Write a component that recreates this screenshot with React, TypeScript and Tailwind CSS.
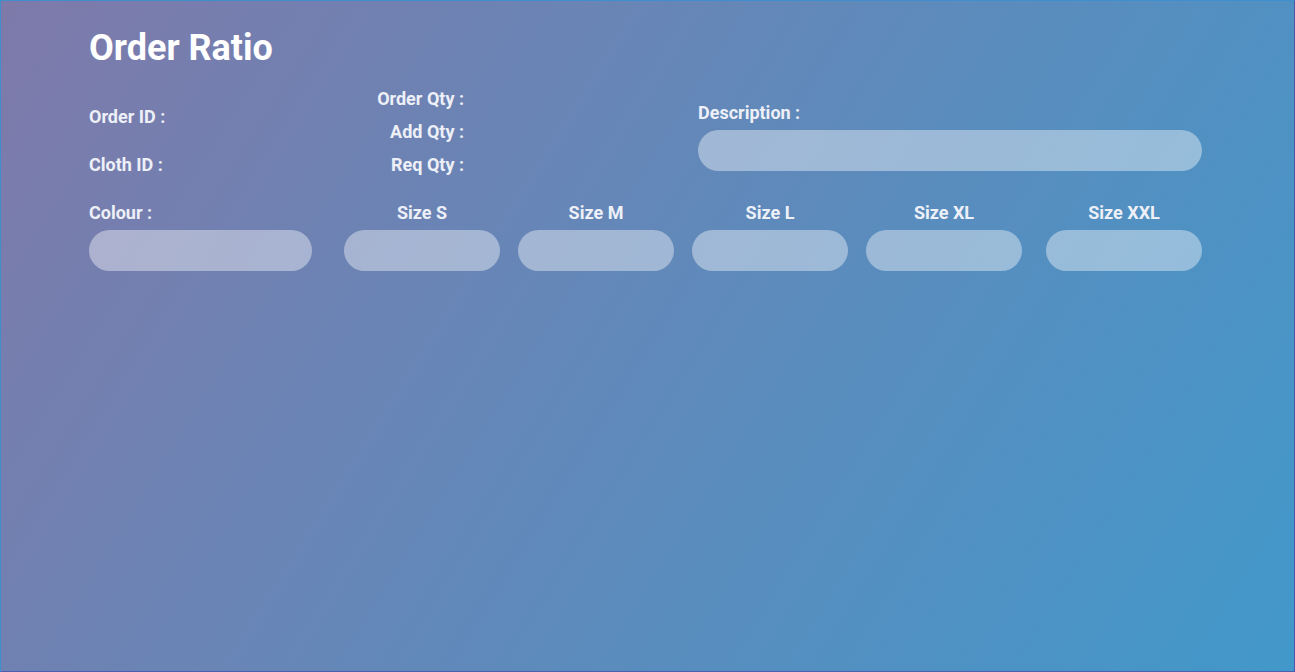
import React from "react";

const font = { fontFamily: "Roboto, 'Noto Sans', sans-serif" };

function Pill({ w }: { w: string }) {
  return <div className={`h-[41px] rounded-full bg-white/40 ${w}`} />;
}

export default function App() {
  const sizes = [
    { label: "Size S", ml: "ml-[32px]" },
    { label: "Size M", ml: "ml-[18px]" },
    { label: "Size L", ml: "ml-[18px]" },
    { label: "Size XL", ml: "ml-[18px]" },
    { label: "Size XXL", ml: "ml-[24px]" },
  ];
  return (
    <div
      style={font}
      className="h-[672px] w-full overflow-hidden border border-t-[#3f8fcf] border-l-[#3f8fcf] border-r-[#4b55a8] border-b-[#4b60b0] bg-[linear-gradient(122deg,#7e7aaa,#4298ca)] text-[#eef0f8]"
    >
      <div className="pl-[88px] pt-[25px]">
        <h1 className="text-[36px] font-bold leading-[44px] text-white">Order Ratio</h1>
        <div className="mt-[12px] flex h-[99px] text-[18px] font-bold">
          <div className="flex w-[223px] flex-col gap-[24px] pt-[23px] leading-[24px]">
            <div>Order ID :</div>
            <div>Cloth ID :</div>
          </div>
          <div className="flex w-[152px] flex-col items-end leading-[33px]">
            <div>Order Qty :</div>
            <div>Add Qty :</div>
            <div>Req Qty :</div>
          </div>
          <div className="ml-[234px] flex w-[504px] flex-col pt-[19px]">
            <div className="leading-[24px]">Description :</div>
            <div className="mt-[5px]">
              <Pill w="w-[504px]" />
            </div>
          </div>
        </div>
        <div className="mt-[20px] flex text-[18px] font-bold">
          <div className="flex w-[223px] flex-col">
            <div className="leading-[24px]">Colour :</div>
            <div className="mt-[5px]">
              <Pill w="w-[223px]" />
            </div>
          </div>
          {sizes.map((s) => (
            <div key={s.label} className={`flex w-[156px] flex-col items-center ${s.ml}`}>
              <div className="leading-[24px]">{s.label}</div>
              <div className="mt-[5px]">
                <Pill w="w-[156px]" />
              </div>
            </div>
          ))}
        </div>
      </div>
    </div>
  );
}
